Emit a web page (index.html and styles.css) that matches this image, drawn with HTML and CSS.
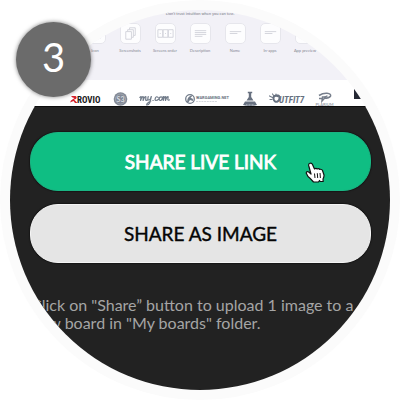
FILE: index.html
```html
<!DOCTYPE html>
<html lang="en">
<head>
<meta charset="utf-8">
<meta name="viewport" content="width=device-width, initial-scale=1">
<title>Step 3: share</title>
<link rel="stylesheet" href="styles.css">
</head>
<body>
<main class="step">
  <div class="lens">
    <section class="tests">
      <p class="tests-note">Don't trust intuition when you can test.</p>
      <ul class="test-list">
        <li><span class="tile"><svg viewBox="0 0 20 20"><path d="M13 13l2 2"/></svg></span>Icon</li>
        <li><span class="tile"><svg viewBox="0 0 20 20"><path d="M5 8h6v8H5zM7 8V6h6v8h-2M9 6V4h6v8h-2"/></svg></span>Screenshots</li>
        <li><span class="tile"><svg viewBox="0 0 20 20"><path d="M2 6h5v8H2zM7.500 6h5v8h-5zM13 6h5v8h-5zM4 10h1M9.500 10h1M15 10h1"/></svg></span>Screens order</li>
        <li><span class="tile"><svg viewBox="0 0 20 20"><path d="M4 7h12M4 9h12M4 11h12M4 13h8"/></svg></span>Description</li>
        <li><span class="tile"><svg viewBox="0 0 20 20"><path d="M4 8h12M4 10h8"/></svg></span>Name</li>
        <li><span class="tile"><svg viewBox="0 0 20 20"><path d="M4 8h12M4 10h8"/></svg></span>In-apps</li>
        <li><span class="tile"></span>App preview</li>
      </ul>
    </section>
    <section class="brands">
      <svg width="32" height="16" viewBox="0 0 32 16"><path d="M1 5h4.500q2 1 .5 3L4 8.500l3.500 3.500H5L3.500 10 0 11.500l1-2 3.500-2.500-2-.5z" fill="#d5202a"/><text class="logo-rovio" x="7" y="12" fill="#181818">ROVIO</text></svg>
      <svg width="13" height="16" viewBox="0 0 13 16"><circle cx="6.500" cy="8" r="6.800" fill="#828995"/><circle cx="6.500" cy="8" r="5" fill="none" stroke="#b4b9c2" stroke-width=".6"/><text class="logo-s3" x="6.500" y="10.500" text-anchor="middle" fill="#d7dae0">S3</text></svg>
      <svg width="34" height="16" viewBox="0 0 34 16"><g fill="none" stroke="#737d8b" stroke-width="1.200" stroke-linecap="round" stroke-linejoin="round" transform="translate(0 .5) scale(1.030 .9)"><path d="M.8 6.500l1.200-1-.5 4.500q1.500-5 2.700-4.300L4 10q1.500-5 2.700-4.300L6.500 9.500q1 1 2-.5M9 5.500q-1 4 .5 4t2.500-4l-1.500 7q-1.500 3-3 2.500-.5-2 4-4.500M13.500 10h.3M18.500 6.500q-1.500-1.500-2.500.5-1 3 .5 3t2.500-1.500M21.500 6q-2 0-2 2.500.5 2 2 1.200 2-1.500.8-3.500M23 6.500l1-1-.5 4.500q1.500-5 2.500-4.300l-.3 4.300q1.500-5 2.600-4.300l-.3 3.500q.5 1 1.500 0"/></g></svg>
      <svg width="46" height="16" viewBox="0 0 46 16"><circle cx="5" cy="8" r="4.300" fill="none" stroke="#737d8b" stroke-width="1.300"/><path d="M2 11q0-6 6-7L5.500 7q3 0 2.500 3l-3-1-2 3z" fill="#737d8b"/><text class="logo-war" x="11" y="8" fill="#677180">WARGAMING.NET</text><path d="M11 10.500h21" stroke="#c9cdd3" stroke-width=".8" stroke-dasharray="2 .7"/></svg>
      <svg width="14" height="16" viewBox="0 0 14 16"><path d="M4.800.8h4.400v1.400H8.200V6l2.300 3.500h-7L5.800 6V2.200h-1zM2 10.500h10l2 3.500q-7 2-14 0z" fill="#687180"/><path d="M3 14h8" stroke="#c0c5cd" stroke-dasharray="1 .5"/></svg>
      <svg width="35" height="16" viewBox="0 0 35 16"><path d="M.5 5l3 1.500M3.500 3l1.500 2M7 3v2M1 8.500h2" stroke="#737d8b" stroke-width="1.200" stroke-linecap="round"/><path d="M9 4.500q-5-.5-4.500 3.500 1 3.500 4 2.500 3-1.500 1.500-5.500-1-1-2.500.5" fill="none" stroke="#677180" stroke-width="2"/><text class="logo-outfit" x="10" y="12" fill="#677180">UTFIT7</text></svg>
      <svg width="17" height="16" viewBox="0 0 17 16"><path d="M3 4.500q4-2.500 8-2.200 4.500.4 3.500 3-1.500 2-6 2L6 10l.5-4q3 .5 5-1.200M3 7.500h3" fill="none" stroke="#777f8c" stroke-width="1.500"/><text class="logo-plarium" x="8.500" y="15" text-anchor="middle" fill="#9a9fa9">PLARIUM</text></svg>
      <svg width="16" height="16" viewBox="0 0 16 16"><path d="M9-2h8V8H9z" fill="#242833"/></svg>
    </section>
    <section class="share">
      <button class="action action-live" type="button">SHARE LIVE LINK
        <svg class="pointer" viewBox="0 0 20 21"><path d="M4.500 1.500Q6.500.5 7.500 2.500L9.500 7q1.500-1.300 2.700 0 1.600-.9 2.600.4 1.900-.6 2.700 1.100L19 13q.2 2-1 4l.2 2.500h-3l-.7-1-1 1.500H8.500Q5 16 3 14.500L1.200 11q.3-2 2.500-1L6 12 3.800 4Q3.300 2 4.500 1.500z" fill="#fff" stroke="#111" stroke-width="1.200" stroke-linejoin="round"/><path d="M9.500 11.500l.5 4.500M12.300 11.200l.4 4.800M15 11l.4 5" fill="none" stroke="#111" stroke-width="1"/></svg>
      </button>
      <button class="action action-image" type="button">SHARE AS IMAGE</button>
      <p class="hint">Click on "Share” button to upload 1 image to a<br>new board in "My boards" folder.</p>
    </section>
  </div>
  <span class="number">3</span>
</main>
</body>
</html>
```
FILE: styles.css
```css
* {
  box-sizing: border-box;
}

body {
  margin: 0;
  background: #fff;
  font-family: Lato, "Liberation Sans", sans-serif;
}

.step {
  position: relative;
  max-width: 400px;
  margin: 0 auto;
}

.lens {
  display: flex;
  flex-direction: column;
  aspect-ratio: 1;
  overflow: hidden;
  border: 10px solid #fbfbfb;
  border-radius: 50%;
  background: #fbfbfb;
}

.tests {
  height: 70px;
  background: #f2f1f7;
  text-align: center;
}

.tests-note {
  margin: 0;
  padding-top: 1px;
  font-size: 4px;
  line-height: 6px;
  color: #777986;
}

.test-list {
  display: grid;
  grid-template-columns: repeat(7, 35px);
  justify-content: center;
  margin: 6px 0 0;
  padding: 0;
  list-style: none;
  font-size: 4px;
  line-height: 6px;
  color: #858692;
}

.tile {
  display: block;
  width: 21px;
  height: 21px;
  margin: 0 auto 4px;
  border: 1px solid #e6e6ec;
  border-radius: 5px;
  background: #fdfdfe;
}

.tile svg {
  display: block;
  fill: none;
  stroke: #d3d4db;
  stroke-width: 1;
}

.brands {
  display: flex;
  gap: 12px;
  height: 26px;
  padding: 11px 0 0 60px;
  background: #fff;
}

.brands svg {
  flex: none;
  overflow: visible;
}

.logo-rovio {
  font: 700 9px "Liberation Sans Narrow", "Roboto Condensed", Roboto, sans-serif;
}

.logo-s3 {
  font: 700 7px Lato, sans-serif;
}

.logo-war {
  font: 700 4px Roboto, sans-serif;
}

.logo-outfit {
  font: italic 700 9px "Liberation Sans Narrow", "Roboto Condensed", Roboto, sans-serif;
}

.logo-plarium {
  font: 700 4px Lato, sans-serif;
}

.share {
  display: flex;
  flex: 1;
  flex-direction: column;
  gap: 13px;
  padding: 25px 19px 0 20px;
  border-top: 1px solid #0c0c0c;
  background: #222;
}

.action {
  position: relative;
  height: 59px;
  padding: 0;
  border: 1px solid;
  border-radius: 28px;
  font-family: inherit;
  font-size: 19px;
  line-height: 24px;
  box-shadow: 0 0 1px 1px #171717;
}

.action-live {
  border-color: #1ab583;
  background: #0fbe83;
  color: #fff;
  -webkit-text-stroke: 0.8px #fff;
}

.action-image {
  border-color: #f4f4f4;
  background: #e5e5e5;
  color: #050505;
  -webkit-text-stroke: 0.4px #050505;
}

.pointer {
  position: absolute;
  top: 29px;
  right: 45px;
  width: 20px;
  height: 21px;
}

.hint {
  margin: 20px 0 0;
  padding-left: 1px;
  font-size: 16px;
  line-height: 18px;
  color: #a5a5a5;
  white-space: nowrap;
}

.number {
  position: absolute;
  top: 22px;
  left: 16px;
  width: 75px;
  height: 75px;
  border-radius: 50%;
  background: #6b6b6b;
  box-shadow: 0 0 4px rgba(0, 0, 0, 0.5);
  color: #fff;
  font-size: 40px;
  line-height: 70px;
  text-align: center;
}
```
